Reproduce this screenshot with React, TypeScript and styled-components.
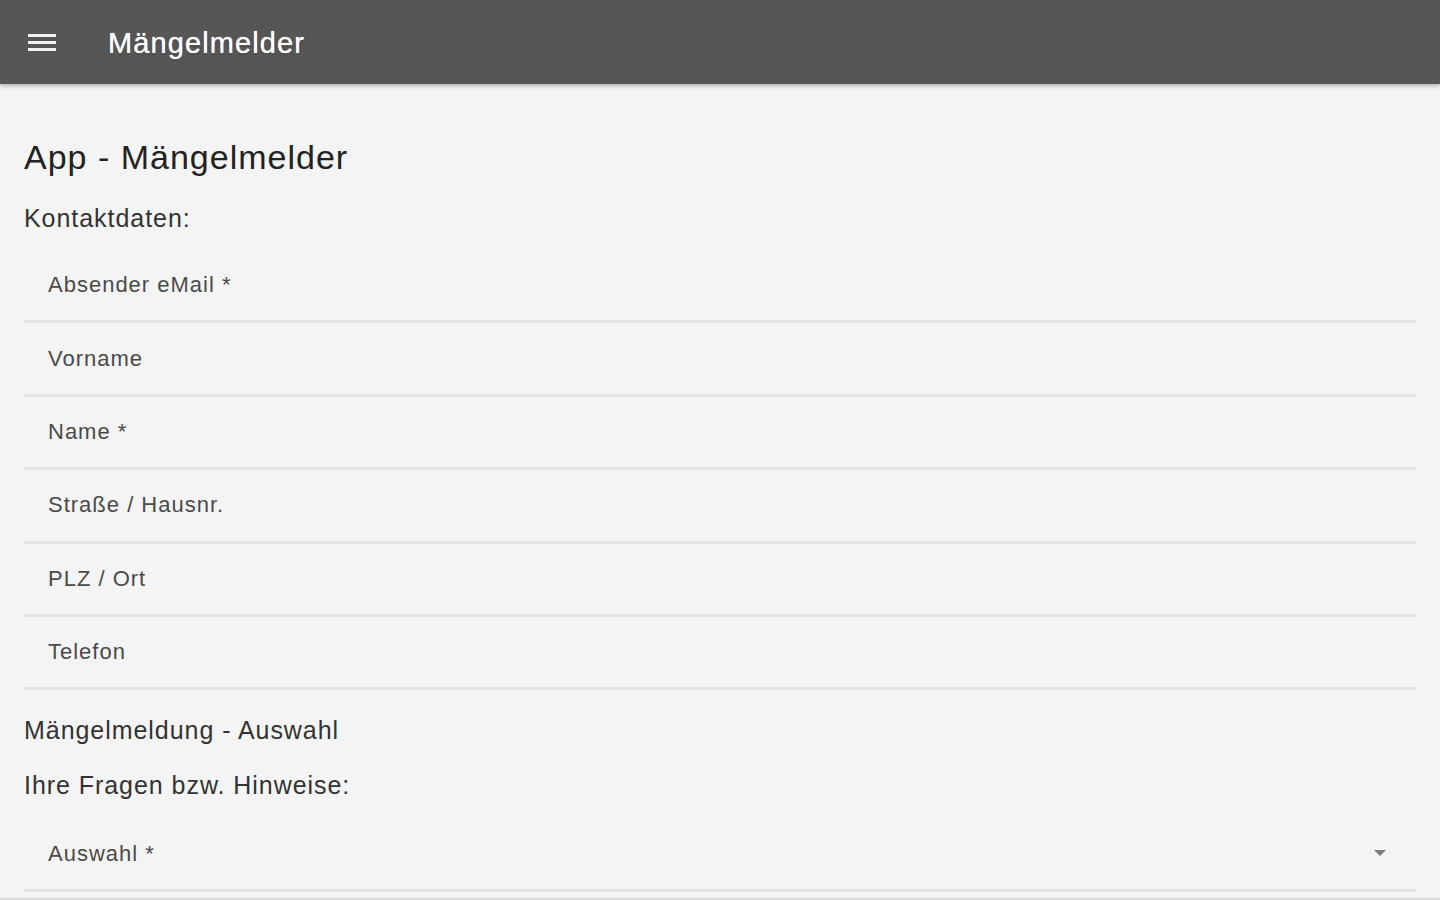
import React from "react";
import styled, { createGlobalStyle } from "styled-components";

const Global = createGlobalStyle`
  html, body { margin: 0; padding: 0; background: #f4f4f4; }
  body { font-family: "Liberation Sans", Arial, sans-serif; overflow: hidden; }
  * { box-sizing: border-box; }
`;

const Page = styled.div`
  min-height: 900px;
  background: #f4f4f4;
  display: flex;
  flex-direction: column;
`;

const AppBar = styled.header`
  height: 84px;
  background: #565656;
  display: flex;
  align-items: center;
  padding: 2px 0 0 28px;
  box-shadow: 0 2px 4px rgba(0, 0, 0, 0.28);
  position: relative;
  z-index: 1;
`;

const MenuButton = styled.div`
  width: 28px;
  display: flex;
  flex-direction: column;
  gap: 4px;
  margin: -2px 52px 0 0;
  span {
    display: block;
    height: 3px;
    background: #f2f2f2;
  }
`;

const AppTitle = styled.h1`
  margin: 0;
  font-size: 29px;
  font-weight: 400;
  letter-spacing: 1.1px;
  color: #ffffff;
  text-shadow: 0 0 1px rgba(255, 255, 255, 0.9), 0 1px 2px rgba(0, 0, 0, 0.3);
`;

const Main = styled.main`
  padding: 0 24px;
  display: flex;
  flex-direction: column;
`;

const PageTitle = styled.h2`
  margin: 53px 0 0;
  font-size: 34px;
  line-height: 40px;
  font-weight: 400;
  letter-spacing: 1px;
  color: #222;
`;

const SectionLabel = styled.div<{ $top: number }>`
  margin-top: ${(p) => p.$top}px;
  font-size: 25px;
  line-height: 32px;
  letter-spacing: 0.95px;
  color: #333;
`;

const FieldList = styled.div<{ $top: number }>`
  margin-top: ${(p) => p.$top}px;
  display: flex;
  flex-direction: column;
`;

const Field = styled.div`
  height: 73.4px;
  border-bottom: 3px solid #e3e3e3;
  display: flex;
  align-items: center;
  justify-content: space-between;
  padding: 0 30px 0 24px;
  font-size: 22px;
  letter-spacing: 1px;
  color: #4a4a4a;
`;

const Arrow = styled.span`
  width: 0;
  height: 0;
  border-left: 6px solid transparent;
  border-right: 6px solid transparent;
  border-top: 6px solid #7a7a7a;
  margin-top: -2px;
`;

const BottomEdge = styled.div`
  margin-top: 6px;
  border-top: 3px solid #d9d9d9;
`;

const fields = [
  "Absender eMail *",
  "Vorname",
  "Name *",
  "Straße / Hausnr.",
  "PLZ / Ort",
  "Telefon",
];

export default function App() {
  return (
    <Page>
      <Global />
      <AppBar>
        <MenuButton>
          <span />
          <span />
          <span />
        </MenuButton>
        <AppTitle>Mängelmelder</AppTitle>
      </AppBar>
      <Main>
        <PageTitle>App - Mängelmelder</PageTitle>
        <SectionLabel $top={25}>Kontaktdaten:</SectionLabel>
        <FieldList $top={16}>
          {fields.map((f) => (
            <Field key={f}>{f}</Field>
          ))}
        </FieldList>
        <SectionLabel $top={24}>Mängelmeldung - Auswahl</SectionLabel>
        <SectionLabel $top={23}>Ihre Fragen bzw. Hinweise:</SectionLabel>
        <FieldList $top={17}>
          <Field>
            Auswahl *
            <Arrow />
          </Field>
        </FieldList>
      </Main>
      <BottomEdge />
    </Page>
  );
}
